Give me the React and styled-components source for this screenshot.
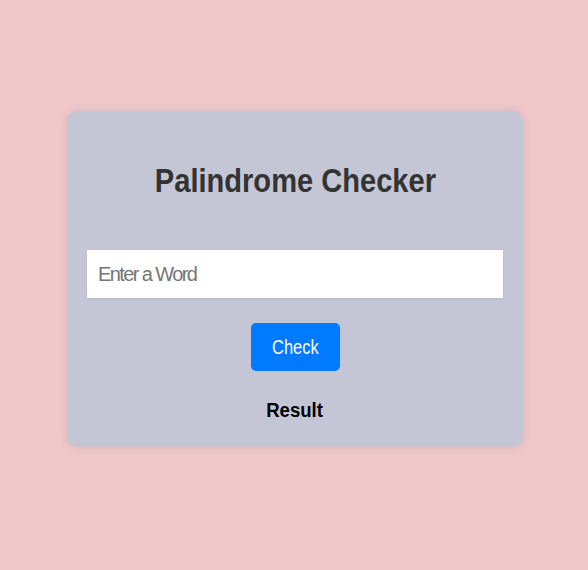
import React, { useState } from "react";
import styled, { createGlobalStyle } from "styled-components";

const GlobalStyle = createGlobalStyle`
  html, body {
    margin: 0;
    padding: 0;
    background: #f0c8c9;
  }
  body {
    font-family: "Liberation Sans", Arial, sans-serif;
  }
`;

const Page = styled.div`
  width: 588px;
  height: 570px;
  padding-top: 111px;
  box-sizing: border-box;
  display: flex;
  justify-content: center;
  align-items: flex-start;
`;

const Card = styled.div`
  width: 456px;
  height: 336px;
  box-sizing: border-box;
  margin-left: 2px;
  background: #c4c6d5;
  border-radius: 10px;
  box-shadow: 0 0 10px rgba(0, 0, 0, 0.1);
  display: flex;
  flex-direction: column;
  align-items: center;
  padding: 48px 20px 0;
`;

/* the reference text is drawn narrower than Arial, so squeeze it */
const Squeeze = styled.span`
  display: inline-block;
  transform: scaleX(${(p) => p.$x});
  transform-origin: center;
`;

const Title = styled.h1`
  margin: 0;
  font-size: 34px;
  line-height: 42px;
  font-weight: 700;
  color: #333333;
`;

const WordInput = styled.input`
  margin-top: 49px;
  width: 416px;
  height: 48px;
  box-sizing: border-box;
  border: none;
  outline: none;
  padding: 0 11px;
  font-family: inherit;
  font-size: 20px;
  letter-spacing: -1.6px;
  color: #333;
  background: #ffffff;
  box-shadow: 0 1px 2px rgba(0, 0, 0, 0.08);
  &::placeholder {
    color: #757575;
  }
`;

const CheckButton = styled.button`
  margin-top: 25px;
  width: 89px;
  height: 48px;
  padding: 0;
  border: none;
  border-radius: 5px;
  background: #007bff;
  color: #ffffff;
  font-family: inherit;
  font-size: 20px;
  cursor: pointer;
`;

const Result = styled.p`
  margin: 28px 0 0;
  font-size: 20px;
  line-height: 23px;
  font-weight: 700;
  color: #000000;
`;

export default function App() {
  const [word, setWord] = useState("");
  const [result, setResult] = useState("Result");

  const check = () => {
    const clean = word.toLowerCase().replace(/[^a-z0-9]/g, "");
    if (!clean) return setResult("Result");
    const same = clean === clean.split("").reverse().join("");
    setResult(same ? `"${word}" is a palindrome` : `"${word}" is not a palindrome`);
  };

  return (
    <>
      <GlobalStyle />
      <Page>
        <Card>
          <Title>
            <Squeeze $x={0.855}>Palindrome Checker</Squeeze>
          </Title>
          <WordInput
            type="text"
            placeholder="Enter a Word"
            value={word}
            onChange={(e) => setWord(e.target.value)}
          />
          <CheckButton onClick={check}>
            <Squeeze $x={0.82}>Check</Squeeze>
          </CheckButton>
          <Result>
            <Squeeze $x={0.93}>{result}</Squeeze>
          </Result>
        </Card>
      </Page>
    </>
  );
}
